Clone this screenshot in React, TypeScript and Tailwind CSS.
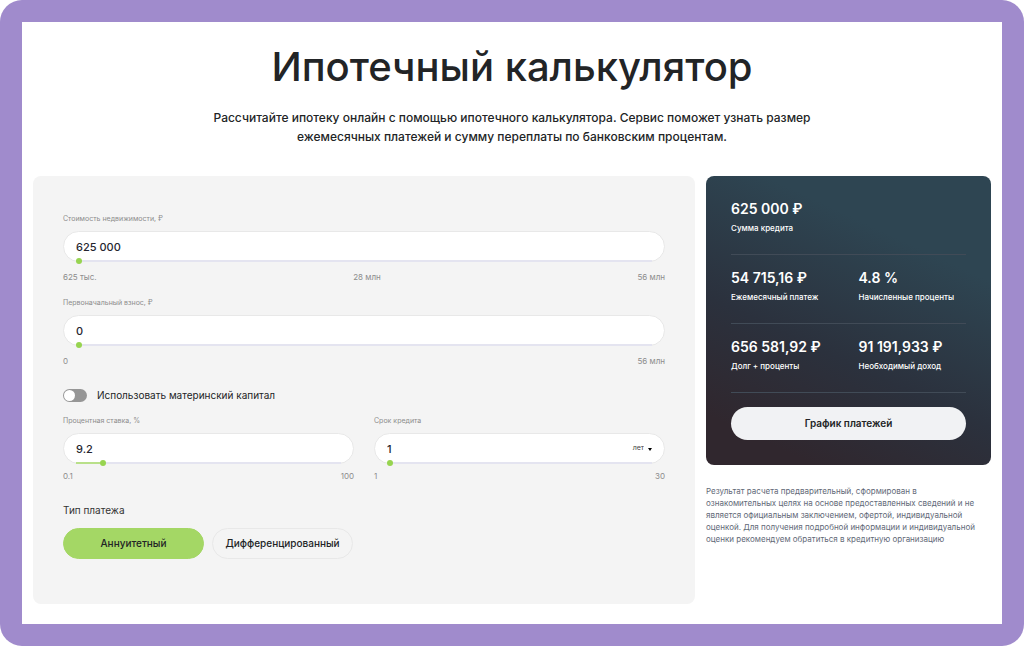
import { useState } from 'react'

type RangeFieldProps = {
  id: string
  label: string
  value: string
  onChange: (value: string) => void
  min: number
  max: number
  step: number
  marks: string[]
  compact?: boolean
  children?: React.ReactNode
}

const results = [
  [{ value: '625 000 ₽', label: 'Сумма кредита' }],
  [
    { value: '54 715,16 ₽', label: 'Ежемесячный платеж' },
    { value: '4.8 %', label: 'Начисленные проценты' },
  ],
  [
    { value: '656 581,92 ₽', label: 'Долг + проценты' },
    { value: '91 191,933 ₽', label: 'Необходимый доход' },
  ],
]

function formatNumber(value: string) {
  return value.replace(/\B(?=(\d{3})+(?!\d))/g, ' ')
}

function RangeField({ id, label, value, onChange, min, max, step, marks, compact, children }: RangeFieldProps) {
  const current = Number(value.replace(/\s/g, '')) || 0
  const fill = Math.min(100, Math.max(0, ((current - min) / (max - min)) * 100))

  return (
    <div>
      <label htmlFor={id} className="block text-[7px] leading-3 text-[#8c8c8c]">
        {label}
      </label>
      <div className="relative mt-1.5 flex h-[31px] items-center rounded-full border border-[#e8e8e8] bg-white px-3">
        <input
          id={id}
          type="text"
          inputMode="decimal"
          value={value}
          onChange={(e) => onChange(e.target.value)}
          className="h-full min-w-0 flex-1 bg-transparent text-[11px] font-medium text-[#25252f] outline-none"
        />
        {children}
        <input
          type="range"
          aria-label={label}
          min={min}
          max={max}
          step={step}
          value={current}
          onChange={(e) => onChange(formatNumber(e.target.value))}
          style={{ '--fill': `${fill}%` } as React.CSSProperties}
          className="absolute inset-x-3 -bottom-[3px] h-1.5 cursor-pointer appearance-none bg-transparent outline-none [&::-webkit-slider-runnable-track]:h-0.5 [&::-webkit-slider-runnable-track]:bg-[linear-gradient(to_right,#b9e08a_var(--fill),#e4e4f0_var(--fill))] [&::-webkit-slider-thumb]:-mt-0.5 [&::-webkit-slider-thumb]:size-1.5 [&::-webkit-slider-thumb]:appearance-none [&::-webkit-slider-thumb]:rounded-full [&::-webkit-slider-thumb]:bg-[#97d450]"
        />
      </div>
      <div className={`flex justify-between text-[8px] leading-3 text-[#8c8c8c] ${compact ? 'mt-1.5' : 'mt-[9px]'}`}>
        {marks.map((m) => (
          <span key={m}>{m}</span>
        ))}
      </div>
    </div>
  )
}

export default function App() {
  const [price, setPrice] = useState('625 000')
  const [deposit, setDeposit] = useState('0')
  const [rate, setRate] = useState('9.2')
  const [term, setTerm] = useState('1')
  const [unit, setUnit] = useState('years')
  const [capital, setCapital] = useState(false)
  const [payment, setPayment] = useState('annuity')

  return (
    <div className="flex min-h-screen flex-col rounded-[22px] bg-[#a08bcc] p-[22px] font-['Inter',sans-serif]">
      <main className="flex-1 bg-white px-[11px] pb-5">
        <h1 className="pt-5 text-center text-[40px] leading-[50px] font-medium text-[#222426]">
          Ипотечный калькулятор
        </h1>
        <p className="mx-auto mt-4 max-w-[640px] text-center text-xs leading-[19px] font-medium text-[#222426]">
          Рассчитайте ипотеку онлайн с помощью ипотечного калькулятора. Сервис поможет узнать размер
          ежемесячных платежей и сумму переплаты по банковским процентам.
        </p>

        <div className="mt-[30px] grid grid-cols-[minmax(0,1fr)_285px] items-start gap-[11px]">
          <form onSubmit={(e) => e.preventDefault()} className="rounded-lg bg-[#f4f4f4] px-[30px] pt-[37px] pb-[45px]">
            <div className="grid gap-3.5">
              <RangeField
                id="price"
                label="Стоимость недвижимости, ₽"
                value={price}
                onChange={setPrice}
                min={625000}
                max={56000000}
                step={1000}
                marks={['625 тыс.', '28 млн', '56 млн']}
              />
              <RangeField
                id="deposit"
                label="Первоначальный взнос, ₽"
                value={deposit}
                onChange={setDeposit}
                min={0}
                max={56000000}
                step={1000}
                marks={['0', '56 млн']}
              />
            </div>

            <label className="mt-5 flex w-fit cursor-pointer items-center gap-2.5 text-[10px] leading-4 text-[#222426]">
              <input
                type="checkbox"
                checked={capital}
                onChange={(e) => setCapital(e.target.checked)}
                className="peer sr-only"
              />
              <span className="flex h-[13px] w-6 rounded-full bg-[#969696] p-px peer-checked:justify-end peer-checked:bg-[#a4d765]">
                <span className="size-[11px] rounded-full bg-white" />
              </span>
              Использовать материнский капитал
            </label>

            <div className="mt-3 grid grid-cols-2 gap-5">
              <RangeField
                id="rate"
                label="Процентная ставка, %"
                value={rate}
                onChange={setRate}
                min={0.1}
                max={100}
                step={0.1}
                marks={['0.1', '100']}
                compact
              />
              <RangeField
                id="term"
                label="Срок кредита"
                value={term}
                onChange={setTerm}
                min={1}
                max={30}
                step={1}
                marks={['1', '30']}
                compact
              >
                <div className="flex items-center gap-1">
                  <select
                    aria-label="Единица срока"
                    value={unit}
                    onChange={(e) => setUnit(e.target.value)}
                    className="appearance-none bg-transparent text-right text-[7px] text-[#444] outline-none"
                  >
                    <option value="years">лет</option>
                    <option value="months">мес</option>
                  </select>
                  <svg viewBox="0 0 4 3" className="mt-0.5 h-[3px] w-1 fill-black" aria-hidden="true">
                    <path d="M0 0h4L2 3z" />
                  </svg>
                </div>
              </RangeField>
            </div>

            <p className="mt-5 text-[10px] leading-4 text-[#333]">Тип платежа</p>
            <div className="mt-2.5 flex gap-2">
              <button
                type="button"
                aria-pressed={payment === 'annuity'}
                onClick={() => setPayment('annuity')}
                className={`h-[31px] w-[141px] rounded-full border text-[10px] font-medium text-[#222426] ${payment === 'annuity' ? 'border-[#a4d765] bg-[#a4d765]' : 'border-[#e8e8e8]'}`}
              >
                Аннуитетный
              </button>
              <button
                type="button"
                aria-pressed={payment === 'diff'}
                onClick={() => setPayment('diff')}
                className={`h-[31px] w-[141px] rounded-full border text-[10px] font-medium text-[#222426] ${payment === 'diff' ? 'border-[#a4d765] bg-[#a4d765]' : 'border-[#e8e8e8]'}`}
              >
                Дифференцированный
              </button>
            </div>
          </form>

          <aside>
            <div className="rounded-lg bg-[linear-gradient(205deg,#2e4552_25%,#2b313d_60%,#30272e_88%)] px-[25px] pt-2.5 pb-[25px] text-white">
              {results.map((row) => (
                <dl key={row[0].label} className="grid grid-cols-2 gap-5 border-b border-[#414b57] pt-[13px] pb-5">
                  {row.map((r) => (
                    <div key={r.label} className="flex flex-col-reverse gap-[3px] whitespace-nowrap">
                      <dt className="text-[8px] leading-3 font-medium">{r.label}</dt>
                      <dd className="text-sm leading-5 font-semibold">{r.value}</dd>
                    </div>
                  ))}
                </dl>
              ))}
              <button type="button" className="mt-3.5 h-[33px] w-full rounded-full bg-[#f1f2f4] text-[10px] font-semibold text-[#222426]">
                График платежей
              </button>
            </div>
            <p className="mt-5 max-w-[276px] text-[8px] leading-3 text-[#626977]">
              Результат расчета предварительный, сформирован в ознакомительных целях на основе предоставленных
              сведений и не является официальным заключением, офертой, индивидуальной оценкой. Для получения
              подробной информации и индивидуальной оценки рекомендуем обратиться в кредитную организацию
            </p>
          </aside>
        </div>
      </main>
    </div>
  )
}
